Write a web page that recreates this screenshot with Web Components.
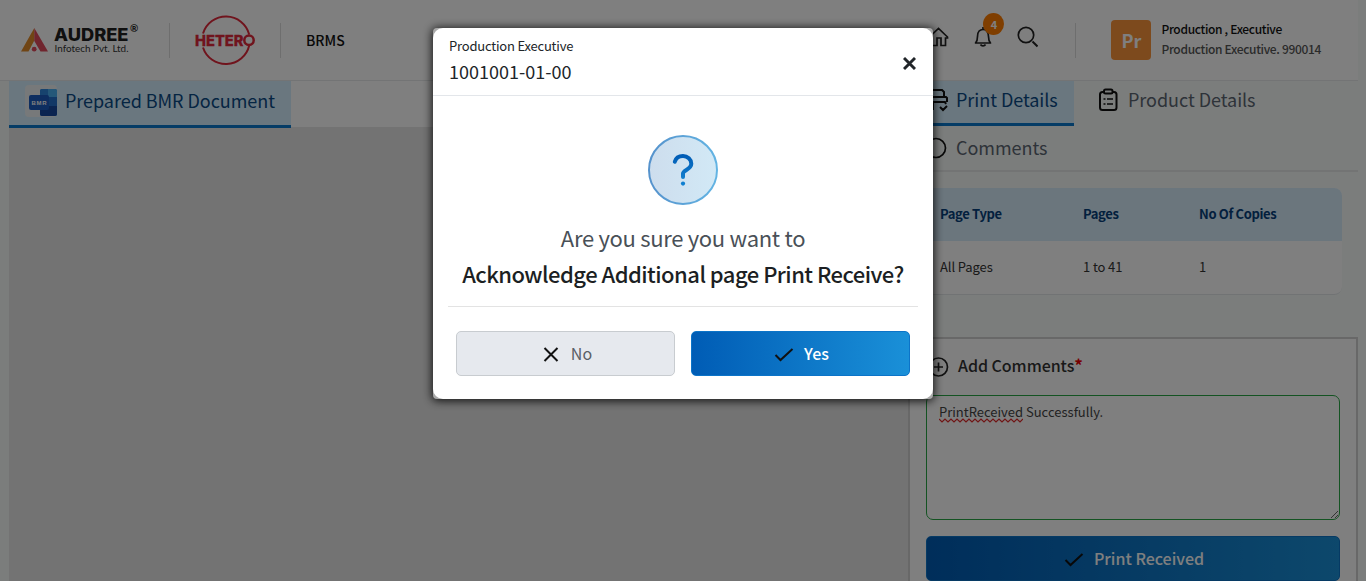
<!DOCTYPE html>
<html lang="en">
<head>
<meta charset="utf-8">
<title>BRMS</title>
<style>
html,body{margin:0;height:100%;overflow:hidden}
body{font-family:"Noto Sans CJK SC","Noto Sans",sans-serif;background:#f7fbf9;color:#212529}
</style>
</head>
<body>
<brms-app></brms-app>
<script>
const define=(name,html)=>customElements.define(name,class extends HTMLElement{
  constructor(){super();this.attachShadow({mode:'open'}).innerHTML='<style>*{box-sizing:border-box}svg{display:block;flex:none}</style>'+html;}
});

define('audree-logo',`<style>:host{display:block;width:118px;height:32px}</style>
<svg width="118" height="32" viewBox="0 0 118 32">
<path d="M13.300 5v12.500L7.500 28.500H0z" fill="#e08a2a"/><path d="M13.300 5L27 28.500h-7.500L13.300 18z" fill="#e04a5c"/><circle cx="13.200" cy="26.200" r="2.400" fill="#e04a5c"/>
<text x="33" y="18" font-family="Inter" font-weight="800" font-size="17" textLength="74.500" lengthAdjust="spacingAndGlyphs" fill="#202020">AUDREE</text>
<text x="33.500" y="29" font-family="Lato" font-size="9.500" textLength="74" lengthAdjust="spacingAndGlyphs" fill="#333">Infotech Pvt. Ltd.</text>
<text x="109" y="8.500" font-family="Lato" font-weight="700" font-size="10" fill="#222">®</text></svg>`);

define('hetero-logo',`<style>:host{display:block;width:61px;height:52px}</style>
<svg width="61" height="52" viewBox="0 0 61 52" fill="none" stroke="#e0283a" stroke-width="2">
<path d="M8 19.500A24 24 0 0 1 54.200 20.500M8 33.500A24 24 0 0 0 54.200 31.500"/><circle cx="54" cy="26.300" r="4.700" stroke-width="2.500"/>
<text x="0" y="31.500" font-family="Inter" font-weight="800" font-size="14.500" textLength="48.500" lengthAdjust="spacingAndGlyphs" fill="#e0283a" stroke="#e0283a" stroke-width=".3">HETER</text></svg>`);

define('user-card',`<style>:host{display:flex;gap:10px;align-items:flex-start}
.a{width:40px;height:40px;border-radius:4px;background:#fb943a;color:#fff;font:700 18px/40px "Noto Sans CJK SC",sans-serif;text-align:center}
.n{font-size:12px;line-height:20px;font-weight:500;letter-spacing:-.33px;color:#111;white-space:nowrap;margin-top:-1px}.r{color:#555}</style>
<div class="a">Pr</div><div class="n"><div>Production , Executive</div><div class="r">Production Executive. 990014</div></div>`);

define('app-header',`<style>:host{display:flex;height:81px;border-bottom:1px solid #e6e9ea;background:#fff;align-items:center;width:1358px;padding:0 37px 0 21px}
i{width:1px;height:35px;background:#dcdcdc}audree-logo{margin:-2px 30px 0 0}hetero-logo{margin:0 24px 0 25px}
b{font-size:14px;font-weight:500;color:#111;margin-left:25px;line-height:20px}
.nav{display:flex;margin-left:auto;gap:22px;align-items:center;margin-top:-7px;margin-right:37px}.bell{position:relative}
.badge{position:absolute;left:11px;top:-14px;width:21px;height:22px;border-radius:50%;background:#ff7d00;color:#fff;font:700 11px/22px "Noto Sans CJK SC",sans-serif;text-align:center}
user-card{margin-left:35px}</style>
<audree-logo></audree-logo><i></i><hetero-logo></hetero-logo><i></i><b>BRMS</b>
<div class="nav"><svg width="22" height="20" viewBox="0 0 22 20" fill="none" stroke="#222" stroke-width="1.700"><path d="M1.500 10L10.500 1.500l9 8.500v1h-2v7.500H13V11H9v7.500H3.500V11h-2z"/></svg>
<div class="bell"><svg width="22" height="20" viewBox="0 0 22 20" fill="none" stroke="#222" stroke-width="1.700"><path d="M11 0v2M3.500 16h15c-2-2-2-3-2-6.500C16.500 4.500 14 2.500 11 2.500S5.500 4.500 5.500 9.500C5.500 13 5.500 14 3.500 16zM8.500 17.500c1 1.800 4 1.800 5 0" stroke-linejoin="round"/></svg><span class="badge">4</span></div>
<svg width="22" height="22" viewBox="0 0 22 22" fill="none" stroke="#222" stroke-width="1.700"><circle cx="10" cy="9" r="7.700"/><path d="M16.500 15.500l5 5" stroke-width="2"/></svg></div>
<i></i><user-card></user-card>`);

define('tab-item',`<style>:host{display:flex;align-items:center;gap:8px;font-size:18px;line-height:26px;color:#5c6672;white-space:nowrap;letter-spacing:-.04px}
span{margin-top:-2px}
:host([active]){background:#d4effe;color:#0b4a86;border-bottom:3px solid #0a78cc}:host([active]) span{margin-top:-4px}</style><slot name="icon"></slot><span><slot></slot></span>`);

define('document-panel',`<style>:host{display:block;background:#e7e7e7}.bar{display:flex;background:#fff;height:46px}
tab-item{width:282px;height:47px;padding:0 0 3px 16px;box-sizing:border-box}svg{margin-top:-1px}</style>
<div class="bar"><tab-item active><svg slot="icon" width="32" height="32" viewBox="0 0 32 32"><rect width="32" height="32" rx="4" fill="#eef2f4"/><rect x="15" y="4" width="17" height="27" rx="2" fill="#2b8de0"/><path d="M15 6q0-2 2-2h6v8h-8z" fill="#2f86dc"/><path d="M23 4h7q2 0 2 2v6h-9z" fill="#4bb0f2"/><path d="M15 12h17v9H15z" fill="#2470cc"/><path d="M15 21h17v8q0 2-2 2H17q-2 0-2-2z" fill="#1648a0"/><rect x="4" y="10" width="20" height="15" rx="2" fill="#1c5cc0"/><text x="6.500" y="20" font-family="Liberation Sans" font-weight="700" font-size="6" fill="#fff" textLength="15">BMR</text></svg>Prepared BMR Document</tab-item></div>`);

define('details-tabs',`<style>:host{display:flex;flex-wrap:wrap;height:91px;border-bottom:2px solid #e6e9e9;align-content:flex-start}
tab-item{box-sizing:border-box;height:45px}.p{width:165px;padding:0 0 3px 18px}.p svg{margin:-1px 0 0 -1px}.d{padding:0 60px 7px 23px;gap:9px}.c{padding:0 0 1px 15px;width:100%}</style>
<tab-item class="p" active><svg slot="icon" width="22" height="24" viewBox="0 0 22 24" fill="none" stroke="#111" stroke-width="2"><path d="M5 8V2h11l2 2v5M3 17V9h17l1 1v4M7 22v-8h12l1 2M14 19l3 3 4-4"/></svg>Print Details</tab-item>
<tab-item class="d"><svg slot="icon" width="22" height="24" viewBox="0 0 22 24" fill="none" stroke="#111" stroke-width="2"><rect x="3" y="4" width="16.500" height="18" rx="2.500"/><rect x="7" y="1.500" width="8.500" height="4" rx="1.500" fill="#f7fbf9"/><path d="M6.500 11h2M10 11h6M6.500 16h2M10 16h6" stroke-width="1.600"/></svg>Product Details</tab-item>
<tab-item class="c"><svg slot="icon" width="24" height="24" viewBox="0 0 24 24" fill="none" stroke="#111" stroke-width="1.700"><circle cx="12" cy="12" r="9.500"/></svg>Comments</tab-item>`);

define('pages-table',`<style>:host{display:block;margin:16px 16px 0 17px;border-radius:8px;overflow:hidden;background:#fff;border-bottom:1px solid #e2e6e8;font-size:13px}
div{display:grid;grid-template-columns:143px 116px 1fr;padding:0 0 2px 14px;height:53px;align-items:center;color:#333;letter-spacing:-.1px}
.h{background:#d6ecfb;color:#06407c;font-weight:700;letter-spacing:-.36px}</style>
<div class="h"><span>Page Type</span><span>Pages</span><span>No Of Copies</span></div><div><span>All Pages</span><span>1 to 41</span><span>1</span></div>`);

define('action-button',`<style>:host{display:flex;height:45px;border-radius:5px;align-items:center;justify-content:center;gap:10px;padding-left:2px;font-size:16px;font-weight:500;background:linear-gradient(90deg,#005cb5,#1a90d8);color:#fff;border:1px solid #0c74c8;box-sizing:border-box}
span{margin-top:-1px}
:host([plain]){background:#e6e9ee;border-color:#c8ccd0;color:#5b6067;font-weight:400;padding-left:3px;gap:11px}</style><slot name="icon"></slot><span><slot></slot></span>`);

define('comment-card',`<style>:host{display:block;margin-top:42px;height:260px;border:2px solid #d0d0d0;background:#fff;padding:0 16px 0 15px}
h3{display:flex;align-items:center;gap:8px;margin:0;height:56px;font-size:16px;font-weight:500;padding:0 0 2px 2px;color:#333;letter-spacing:-.05px}
h3 svg{margin-top:2px}h3 span{margin-top:-3px}sup{color:#e00;font-size:17px;line-height:0;vertical-align:0;font-weight:700}
textarea{display:block;width:100%;height:125px;border:1px solid #28a745;border-radius:7px;padding:6px 12px;font:13px/20px "Noto Sans CJK SC",sans-serif;color:#444;background:#fff;margin-bottom:16px}
.t{position:relative}.w{position:absolute;left:13px;top:23px}</style>
<h3><svg width="22" height="22" viewBox="0 0 22 22" fill="none" stroke="#222" stroke-width="1.700"><circle cx="10.500" cy="11" r="9"/><path d="M10.500 6.500v9M6 11h9"/></svg><span>Add Comments<sup>*</sup></span></h3>
<div class="t"><textarea spellcheck="false">PrintReceived Successfully.</textarea><svg class="w" width="84" height="5" viewBox="0 0 84 5" fill="none" stroke="#e02a2a" stroke-width="1.200"><path d="M0 1l3 3 3-3 3 3 3-3 3 3 3-3 3 3 3-3 3 3 3-3 3 3 3-3 3 3 3-3 3 3 3-3 3 3 3-3 3 3 3-3 3 3 3-3 3 3 3-3 3 3 3-3 3 3 3-3"/></svg></div>
<action-button><svg slot="icon" width="20" height="18" viewBox="0 0 20 18" fill="none" stroke="#111" stroke-width="2"><path d="M1.500 10l5 5L18.500 4"/></svg>Print Received</action-button>`);

define('confirm-dialog',`<style>:host{display:block;width:500px;height:371px;background:#a9a9a9;border-radius:4px;box-shadow:0 1px 10px 1px rgba(0,0,0,.85);box-sizing:border-box}
.m{height:371px;background:#fff;border-radius:10px}
header{display:flex;height:68px;border-bottom:1px solid #e3e6ea;padding:0 17px 0 16px;justify-content:space-between;align-items:flex-start}
.s{font-size:13px;line-height:20px;margin-top:8px;color:#212529;letter-spacing:-.2px}.n{font-size:18px;line-height:26px;margin-top:2px;color:#212529}
header svg{margin-top:29px}
.b{display:flex;flex-direction:column;align-items:center;margin:0 15px;height:211px;border-bottom:1px solid #e3e3e3;padding-top:39px}
.q{font-size:22px;line-height:36px;color:#495057;margin-top:14px;white-space:nowrap;letter-spacing:-.3px}.k{color:#1c1f23;font-weight:500;margin:0;letter-spacing:-.53px}
footer{display:grid;grid-template-columns:1fr 1fr;gap:16px;padding:24px 23px}</style>
<div class="m"><header><div><div class="s">Production Executive</div><div class="n">1001001-01-00</div></div><svg width="13" height="13" viewBox="0 0 13 13" stroke="#212529" stroke-width="2.900"><path d="M1 1l11 11M12 1L1 12"/></svg></header>
<div class="b"><svg width="70" height="70" viewBox="0 0 70 70" fill="none"><defs><linearGradient id="f"><stop stop-color="#cddded"/><stop offset="1" stop-color="#d2e9f6"/></linearGradient><linearGradient id="s"><stop stop-color="#5592cc"/><stop offset="1" stop-color="#63b4e3"/></linearGradient><linearGradient id="g" gradientUnits="userSpaceOnUse" x1="0" y1="20" x2="0" y2="50"><stop stop-color="#005cb5"/><stop offset="1" stop-color="#1888d4"/></linearGradient></defs><circle cx="35" cy="35" r="34" fill="url(#f)" stroke="url(#s)" stroke-width="2"/><path d="M26.800 26.800C28 22.500 31.500 21 35 21C39.500 21 43.300 24.500 43.300 28.700C43.300 34.500 35 35 35 38.500V42" stroke="url(#g)" stroke-width="4" stroke-linecap="round" stroke-linejoin="round"/><circle cx="35" cy="48.600" r="2.100" fill="#0f7fd0"/></svg>
<div class="q">Are you sure you want to</div><div class="q k">Acknowledge Additional page Print Receive?</div></div>
<footer><action-button plain><svg slot="icon" width="18" height="16" viewBox="0 0 18 16" stroke="#111" stroke-width="2"><path d="M2.500 2l13 13M15.500 2l-13 13"/></svg>No</action-button>
<action-button><svg slot="icon" width="20" height="18" viewBox="0 0 20 18" fill="none" stroke="#111" stroke-width="2"><path d="M1.500 10l5 5L18.500 4"/></svg>Yes</action-button></footer></div>`);

define('brms-app',`<style>:host{display:block;height:100%}
main{display:grid;grid-template-columns:900px 449px;margin-left:9px;height:500px}
comment-card{margin-left:-1px;padding-left:16px}
.o{position:fixed;inset:0;background:rgba(0,0,0,.5);display:flex;justify-content:center;align-items:flex-start;padding-top:28px}</style>
<app-header></app-header><main><document-panel></document-panel><section><details-tabs></details-tabs><pages-table></pages-table><comment-card></comment-card></section></main>
<div class="o"><confirm-dialog></confirm-dialog></div>`);
</script>
</body>
</html>
